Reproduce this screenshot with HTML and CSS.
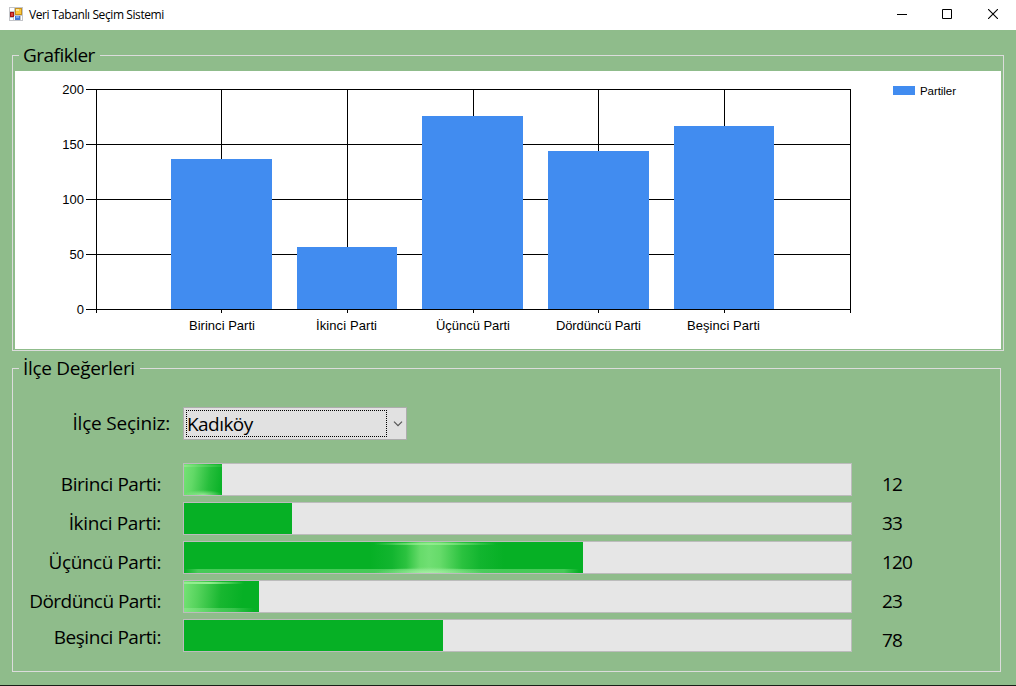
FILE: index.html
```html
<!DOCTYPE html>
<html lang="tr">
<head>
<meta charset="utf-8">
<title>Veri Tabanlı Seçim Sistemi</title>
<link rel="stylesheet" href="styles.css">
</head>
<body>
<div class="window">
  <header class="titlebar">
    <svg class="app-icon" width="14" height="14" viewBox="0 0 14 14" shape-rendering="crispEdges">
      <path fill="#c3c5c9" d="M0 0h14v14H0z"/>
      <path fill="#fff" d="M1 1h4v3H1zM1 11h3v2H1zM5 9h1v4H5zM12 9h1v4h-1z"/>
      <path fill="#a51616" d="M1 5h4v5H1z"/><path fill="#e0463a" d="M2 6h2v3H2z"/>
      <path fill="#c8921c" d="M6 1h7v7H6z"/><path fill="#fbc83c" d="M7 2h5v5H7z"/><path fill="#fde69a" d="M7 2h3v2H7z"/>
      <path fill="#4378d4" d="M6 9h5v4H6z"/><path fill="#76a7f1" d="M7 9h3v2H7z"/>
    </svg>
    <h1 class="title">Veri Tabanlı Seçim Sistemi</h1>
    <div class="controls">
      <svg width="10" height="10" viewBox="0 0 10 10" shape-rendering="crispEdges"><path fill="#000" d="M0 5h10v1H0z"/></svg>
      <svg width="10" height="10" viewBox="0 0 10 10"><path fill="none" stroke="#000" d="M.5.5h9v9h-9z"/></svg>
      <svg class="close" width="10" height="10" viewBox="0 0 10 10"><path fill="none" stroke="#000" stroke-width="1.1" d="M0 0l10 10M10 0L0 10"/></svg>
    </div>
  </header>

  <main class="form">
    <section class="group charts">
      <h2 class="legend legend-charts"><span>Grafikler</span></h2>
      <svg class="chart" width="986" height="278" viewBox="15 71 986 278">
        <g class="lines" shape-rendering="crispEdges">
          <path d="M86 89.5h765M86 144.5h765M86 199.5h765M86 254.5h765M86 309.5h765"/>
          <path d="M96.500 89v224M221.500 89v224M347.500 89v224M473.500 89v224M598.500 89v224M724.500 89v224M850.500 89v224"/>
        </g>
        <g class="columns" shape-rendering="crispEdges">
          <path d="M171 159h101v150H171zM297 247h100v62H297zM422 116h101v193H422zM548 151h101v158H548zM674 126h100v183H674z"/>
          <path d="M893 86h22v9h-22z"/>
        </g>
        <g class="ticks">
          <text x="84" y="94">200</text>
          <text x="84" y="149">150</text>
          <text x="84" y="204">100</text>
          <text x="84" y="259">50</text>
          <text x="84" y="314">0</text>
        </g>
        <g class="names">
          <text x="222" y="330" textLength="66">Birinci Parti</text>
          <text x="346.500" y="330" textLength="61">İkinci Parti</text>
          <text x="473" y="330" textLength="74">Üçüncü Parti</text>
          <text x="598.500" y="330" textLength="85">Dördüncü Parti</text>
          <text x="723.500" y="330" textLength="73">Beşinci Parti</text>
        </g>
        <text class="series" x="920" y="95" textLength="36">Partiler</text>
      </svg>
    </section>

    <section class="group values">
      <h2 class="legend legend-values"><span>İlçe Değerleri</span></h2>
      <div class="picker">
        <span class="label label-picker">İlçe Seçiniz:</span>
        <div class="combo">
          <span class="combo-value">Kadıköy</span>
          <svg class="chevron" width="10" height="6" viewBox="0 0 10 6"><path fill="none" stroke="#555" stroke-width="1.2" d="M1 .7l4 4 4-4"/></svg>
        </div>
      </div>
      <div class="rows">
        <div class="row"><span class="label">Birinci Parti:</span><div class="bar"><div class="fill fill-birinci"></div></div><span class="count">12</span></div>
        <div class="row"><span class="label label-ikinci">İkinci Parti:</span><div class="bar"><div class="fill fill-ikinci"></div></div><span class="count">33</span></div>
        <div class="row"><span class="label">Üçüncü Parti:</span><div class="bar"><div class="fill fill-ucuncu"></div></div><span class="count">120</span></div>
        <div class="row"><span class="label label-dorduncu">Dördüncü Parti:</span><div class="bar"><div class="fill fill-dorduncu"></div></div><span class="count">23</span></div>
        <div class="row last"><span class="label">Beşinci Parti:</span><div class="bar"><div class="fill fill-besinci"></div></div><span class="count">78</span></div>
      </div>
    </section>
  </main>
</div>
</body>
</html>
```
FILE: styles.css
```css
* { box-sizing: border-box; }

body {
  margin: 0;
  font-family: "Open Sans", "Noto Sans", sans-serif;
  color: #000;
}

h1, h2 { margin: 0; font-weight: 400; }

.window {
  display: flex;
  flex-direction: column;
  width: 1016px;
  height: 686px;
  overflow: hidden;
  background: #8fbc8b;
  border-bottom: 1px solid #1a1e18;
}

.titlebar {
  display: flex;
  align-items: center;
  flex: none;
  height: 30px;
  padding: 0 18px 2px 9px;
  background: #fff;
}

.title {
  margin-left: 6px;
  font-size: 12px;
  line-height: 16px;
  letter-spacing: -0.41px;
  white-space: nowrap;
  padding-top: 2px;
}

.controls {
  display: flex;
  gap: 35px;
  margin-left: auto;
}

.close { margin-left: 1px; }

.form { padding: 25px 12px 0; }

.group { border: 1px solid #dcdcdc; }

.charts {
  width: 992px;
  height: 296px;
  padding: 0 2px;
}

.values {
  width: 989px;
  height: 304px;
  margin-top: 17px;
}

.legend {
  height: 20px;
  margin-top: -11px;
  background: #8fbc8b;
  padding-left: 4px;
  font-size: 19px;
  line-height: 20px;
  white-space: nowrap;
}

.legend-charts { width: 81px; margin-left: 4px; margin-bottom: 6px; letter-spacing: -0.52px; }
.legend-values { width: 121px; margin-left: 6px; padding-left: 4px; letter-spacing: -0.3px; }

.chart { display: block; background: #fff; }
.lines path { fill: none; stroke: #000; }
.columns path { fill: #418cf0; }
.chart text { font-family: "Liberation Sans", Arial, sans-serif; font-size: 13px; }
.ticks text { text-anchor: end; }
.names text { text-anchor: middle; }
.chart .series { font-size: 11.5px; }

.picker {
  display: flex;
  align-items: center;
  height: 33px;
  margin-top: 29px;
}

.label {
  width: 148px;
  text-align: right;
  font-size: 19px;
  line-height: 24px;
  letter-spacing: -0.45px;
  white-space: nowrap;
}

.label-ikinci { letter-spacing: -0.35px; }
.label-dorduncu { letter-spacing: -0.54px; }
.label-picker { width: 157px; padding-bottom: 1px; letter-spacing: -0.2px; }

.combo {
  display: flex;
  align-items: center;
  width: 224px;
  height: 33px;
  margin-left: 13px;
  padding: 0 3px 0 2px;
  border: 1px solid #adadad;
  background: #e1e1e1;
}

.combo-value {
  width: 201px;
  height: 27px;
  border: 1px dotted #000;
  font-size: 19px;
  line-height: 27px;
  letter-spacing: -0.55px;
}

.chevron { margin-left: 6px; }

.rows {
  display: grid;
  gap: 6px;
  margin-top: 23px;
}

.row {
  display: flex;
  height: 33px;
}

.row .label { padding-top: 9px; }
.row.last .label { padding-top: 6px; }

.bar {
  width: 669px;
  height: 33px;
  margin-left: 22px;
  border: 1px solid #bcbcbc;
  background: #e6e6e6;
}

.count {
  margin-left: 30px;
  padding-top: 9px;
  font-size: 19px;
  line-height: 24px;
  letter-spacing: -0.9px;
}

.fill { height: 31px; background: #06b025; }
.fill-birinci {
  width: 38px;
  background:
    linear-gradient(90deg, #8ee989, #1fbd36) 0 1px / 100% 2px no-repeat,
    radial-gradient(ellipse 20px 5px at 50% 100%, rgba(170, 240, 165, .8), transparent) 0 0 / 100% 100%,
    linear-gradient(98deg, #76e276 0%, #62d967 25%, #26be3b 65%, #06b025 100%);
}
.fill-ikinci { width: 108px; }
.fill-ucuncu {
  width: 399px;
  background:
    linear-gradient(90deg, transparent 190px, #90ec8c 245px, transparent 312px) 0 1px / 100% 2px no-repeat,
    radial-gradient(ellipse 55px 6px at 245px 100%, rgba(180, 244, 175, .8), transparent),
    linear-gradient(90deg, transparent, rgba(120, 224, 128, .55) 14px, rgba(120, 224, 128, .55) 380px, transparent 395px) 0 100% / 100% 4px no-repeat,
    linear-gradient(90deg, #06b025 186px, #12b52f 208px, #2bc23f 222px, #66db6a 236px, #70df73 245px, #66db6a 256px, #2bc23f 278px, #12b52f 296px, #06b025 320px);
}
.fill-dorduncu {
  width: 75px;
  background:
    linear-gradient(90deg, #94ed90 25px, transparent 60px) 0 1px / 100% 2px no-repeat,
    linear-gradient(90deg, rgba(150, 235, 150, .5), rgba(120, 224, 128, .4) 50px, transparent 70px) 0 100% / 100% 4px no-repeat,
    linear-gradient(96deg, #76e276 0, #55d35c 15px, #18b730 38px, #06b025 60px);
}
.fill-besinci { width: 259px; }
```
